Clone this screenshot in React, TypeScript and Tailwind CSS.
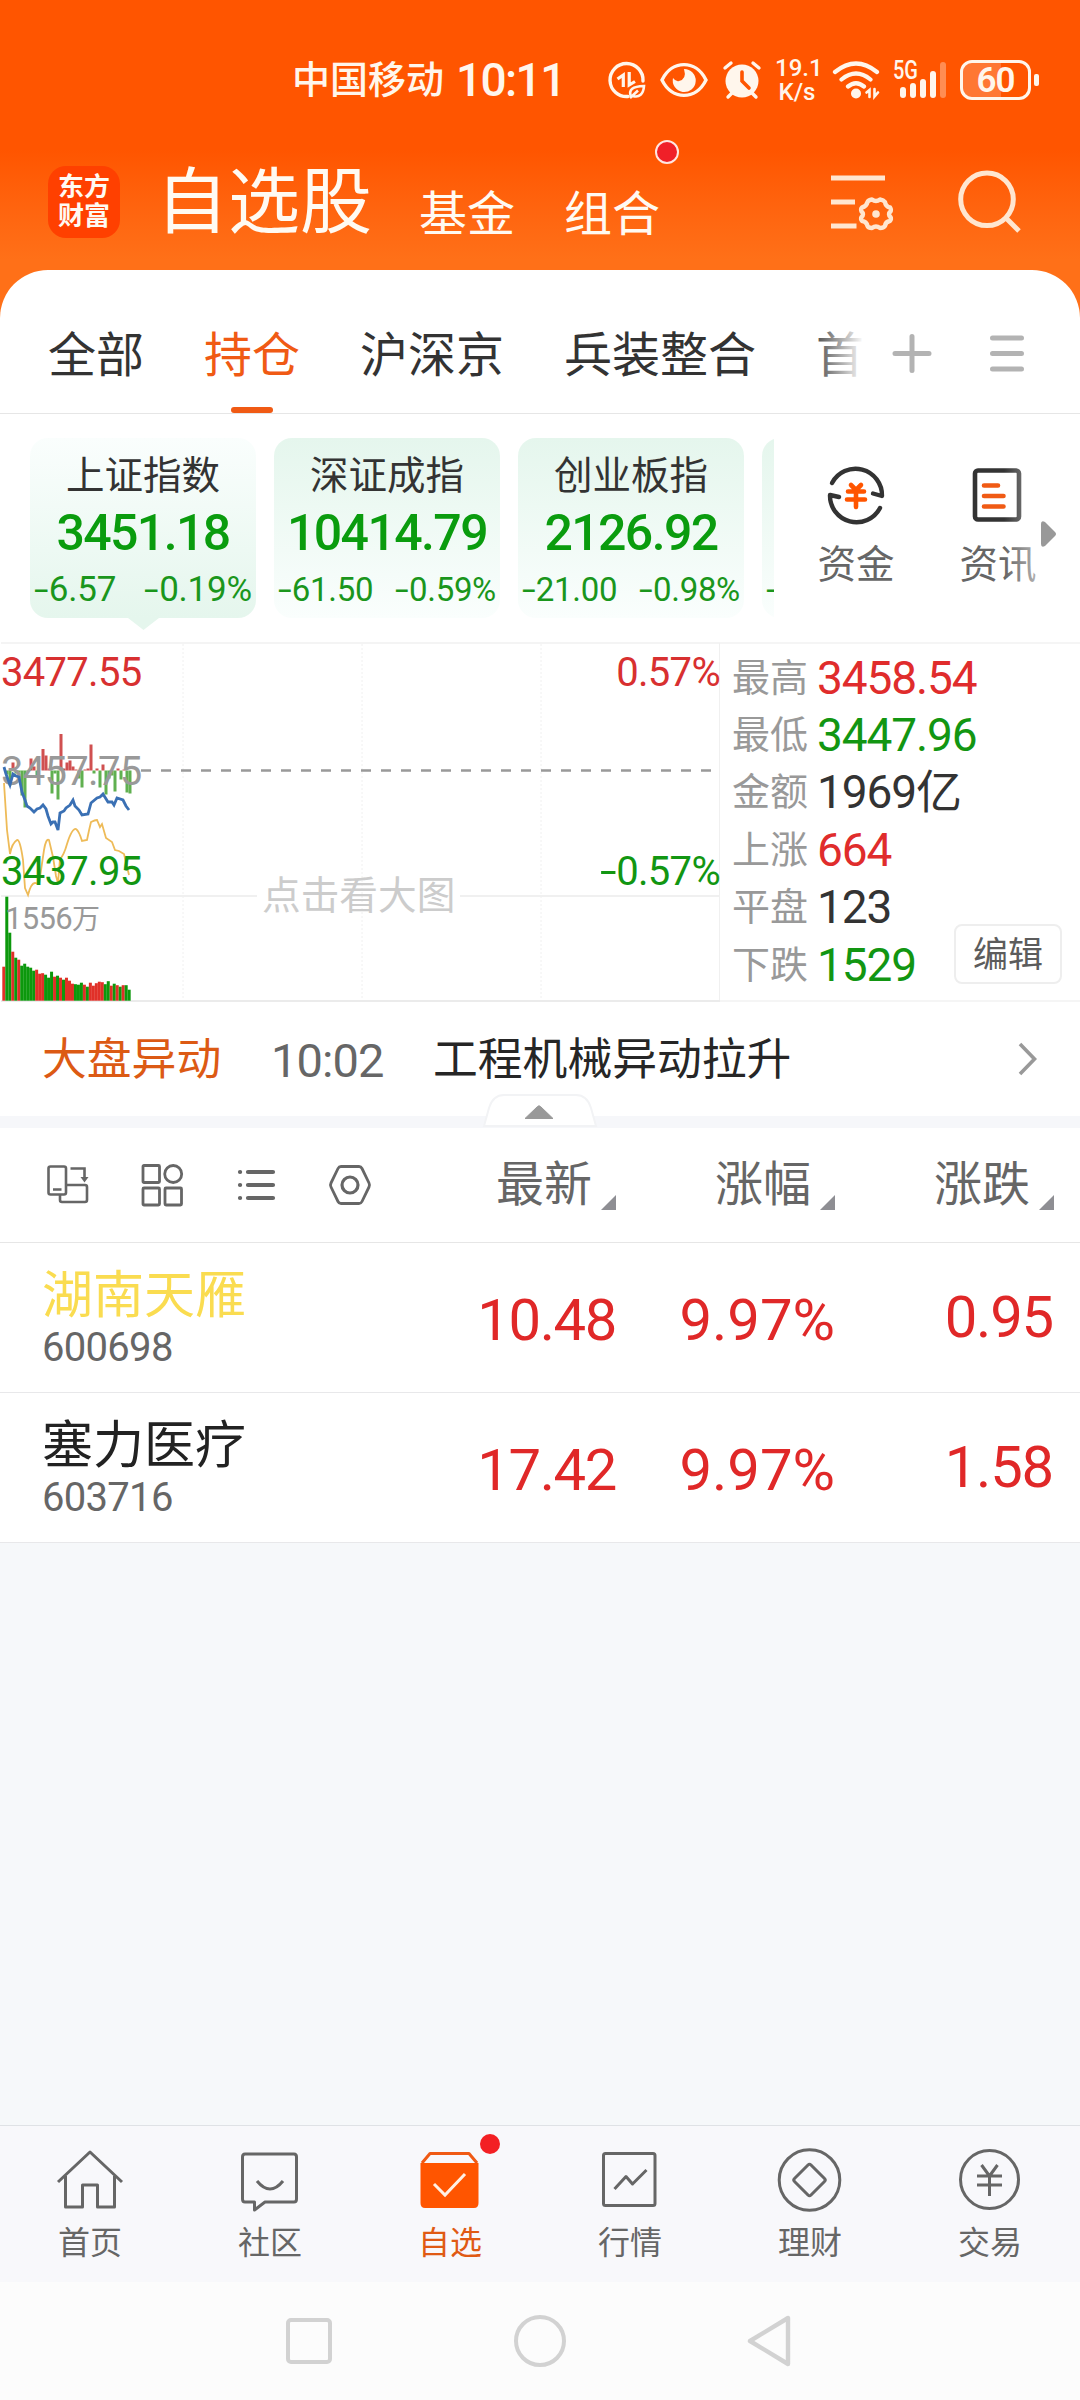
import type { ReactNode } from 'react'
import clsx from 'clsx'

const TABS = ['全部', '持仓', '沪深京', '兵装整合', '首']

const INDICES = [
  { name: '上证指数', value: '3451.18', diff: '-6.57', pct: '-0.19%' },
  { name: '深证成指', value: '10414.79', diff: '-61.50', pct: '-0.59%' },
  { name: '创业板指', value: '2126.92', diff: '-21.00', pct: '-0.98%' },
]

const STATS = [
  { label: '最高', value: '3458.54', color: 'text-[#e02c2c]' },
  { label: '最低', value: '3447.96', color: 'text-[#129612]' },
  { label: '金额', value: '1969亿', color: 'text-[#333]' },
  { label: '上涨', value: '664', color: 'text-[#e02c2c]' },
  { label: '平盘', value: '123', color: 'text-[#333]' },
  { label: '下跌', value: '1529', color: 'text-[#129612]' },
]

const COLUMNS = ['最新', '涨幅', '涨跌']

const STOCKS = [
  { name: '湖南天雁', code: '600698', price: '10.48', pct: '9.97%', diff: '0.95', marked: true },
  { name: '塞力医疗', code: '603716', price: '17.42', pct: '9.97%', diff: '1.58', marked: false },
]

// [x, height]: positive goes up in red, negative goes down in green
const FLOW = [
  [7, -4], [10, -15], [13, 8], [16, -3], [19, -2], [22, -25], [25, -37], [28, -1], [31, 12], [34, 4],
  [37, -5], [43, 21.5], [46, 15], [49, 2], [52, -23], [55, -3], [58, -29], [61, 36.5], [64, 2], [67, 8],
  [70, 10], [73, 4], [76, 1], [79, -8], [82, -17], [85, 1], [88, 2], [91, 26], [94, -3], [97, 2],
  [100, -17], [103, 6], [106, -24], [109, -8], [112, -5], [115, -21], [118, 2], [121, -9], [124, 1],
  [127, -22], [130, -23],
]

const VOLUME = [
  34, 104, 68, 49, 43, 41, 35, 37, 34, 33, 30, 31, 27, 27.5, 26, 23, 29, 24, 25, 23, 21, 23, 20, 17, 16.5,
  16, 18, 16, 14, 18, 15, 17.5, 19, 18.5, 16.5, 19.5, 15, 17, 15.5, 14, 15.5, 15.5, 11,
]
const VOLUME_DIR = 'rggrgrgggggrrrgggrgrgrrrgggrgrrrrrggrgrgrgg'

const BLUE_LINE =
  '4,127 6,134 10,145 13,134 16,136 19,137 22,152 25,160 27,166 30,168 34,172 37,169 40,168 43,165 46,169 48,176 51,184 53,182 55,182 58,190 60,173 64,171 66,168 70,165 73,160 75,166 79,170 82,175 88,174 91,163 97,158 100,157 103,154 108,162 112,162 114,165 117,158 123,160 126,166 129,170'
const YELLOW_LINE =
  'M4 143 L7 190 L10 214 Q12 203 17 200 Q20 199 23 220 L25 248 L28 255 Q31 243 35 243 L39 244 L44 210 Q46 198 49 200 L53 217 L56 236 L58 243 L60 219 Q64 215 67 204 Q72 188 76 189 Q79 191 82 201 L87 200 Q89 190 91 182 Q95 180 97 180 L100 187 L102 184 L106 198 L112 202 L115 210 L119 211 L124 214 L129 235'

/** Number text, with the short hyphen stretched into a proper minus */
function Num({ children, className }: { children: string; className?: string }) {
  const negative = children.startsWith('-')
  return (
    <span className={className}>
      {negative && <span className="inline-block origin-left scale-x-150 mr-[0.15em]">-</span>}
      {negative ? children.slice(1) : children}
    </span>
  )
}

function StatusBar() {
  return (
    <div className="h-[160px] pl-[292px] flex items-center text-[#fff6ec]">
      <span className="w-[164px] text-[38px] leading-none font-medium">中国移动</span>
      <span className="w-[150px] text-[46px] leading-none font-medium tracking-[-1.6px]">10:11</span>

      <svg className="w-[40px] h-[40px]" viewBox="0 0 40 40" fill="none" stroke="currentColor">
        <path d="M37 21 A16.5 16.5 0 1 0 22 36.5" strokeWidth="3.4" strokeLinecap="round" />
        <path d="M17.3 27 V15 L11.5 19" strokeWidth="3.2" />
        <path d="M23.2 12 V25 L29 21.5" strokeWidth="3.2" />
        <path d="M25 37 C22 29 27 26.500 38 26 C37.500 34 33 38 27 36 M24 38 L32 30.500" strokeWidth="2.6" />
      </svg>
      <svg className="ml-[13px] w-[50px] h-[40px]" viewBox="0 0 50 40" fill="none">
        <path d="M3 20 C13 -0.5 37 -0.5 47 20 C37 40.500 13 40.500 3 20Z" stroke="currentColor" strokeWidth="3.4" />
        <path d="M25 9 A11.5 11.5 0 1 1 14 18 Q17 22 20 21 Q28 19 25 9Z" fill="currentColor" />
      </svg>
      <svg className="ml-[13px] w-[40px] h-[40px]" viewBox="0 0 40 40" fill="none" strokeLinecap="round">
        <circle cx="20" cy="21" r="16.5" fill="currentColor" />
        <path d="M3 8 L9 3 M37 8 L31 3 M6 37 L10 33 M34 37 L30 33" stroke="currentColor" strokeWidth="3.4" />
        <path d="M20 12 V21 L27 28" stroke="#ff5500" strokeWidth="3.6" />
      </svg>
      <div className="ml-[13px] w-[44px] text-center text-[24px] leading-[24px] font-medium">
        <div>19.1</div>
        <div>K/s</div>
      </div>
      <svg className="ml-[13px] w-[50px] h-[40px]" viewBox="0 0 50 40" fill="none" stroke="currentColor" strokeLinecap="round">
        <path d="M3 12 Q24 -5 45 12 M9.5 19.5 Q24 7.5 38.5 19.5 M16 26.5 Q24 20 32 26.5" strokeWidth="4.2" />
        <circle cx="24" cy="33.5" r="5" fill="currentColor" stroke="none" />
        <path d="M37.5 37 V30 L34.5 32.5 M42.5 29 V36.5 L46 32.5" strokeWidth="2.6" />
      </svg>
      <div className="relative ml-[9px] w-[58px] h-[40px]">
        <span className="absolute left-[2px] top-0 text-[25px] leading-[22px] font-medium origin-left scale-x-[0.8]">5G</span>
        <svg className="w-[58px] h-[40px]" viewBox="0 0 58 40" fill="currentColor">
          <rect x="9" y="27" width="6" height="11" rx="3" />
          <rect x="19" y="23" width="6" height="15" rx="3" />
          <rect x="29" y="19" width="6" height="19" rx="3" />
          <rect x="39" y="11" width="6" height="27" rx="3" />
          <rect x="49" y="2" width="6" height="36" rx="3" opacity="0.35" />
        </svg>
      </div>
      <div className="ml-[11px] relative w-[71px] h-[40px] rounded-[12px] border-[3px] border-current overflow-hidden flex items-center justify-center">
        <div className="absolute left-0 inset-y-0 w-[38px] bg-white/20" />
        <span className="relative text-[35px] leading-none font-semibold tracking-[-1px]">60</span>
      </div>
      <div className="ml-[3px] w-[5px] h-[12px] rounded-[2px] bg-current" />
    </div>
  )
}

function TitleBar() {
  return (
    <div className="h-[110px] flex items-start text-[#fffaf2] leading-none">
      <div className="ml-[48px] mt-[6px] size-[72px] rounded-[18px] bg-[#ff4000] flex flex-col items-center justify-center text-[26px] leading-[29px] font-bold">
        <span>东方</span>
        <span>财富</span>
      </div>
      <span className="ml-[36px] mt-[7px] text-[72px]">自选股</span>
      <span className="ml-[47px] mt-[31px] text-[48px]">基金</span>
      <div className="relative ml-[49px] mt-[31px] text-[48px]">
        组合
        <span className="absolute left-[91px] -top-[51px] size-[24px] rounded-full bg-[#f02028] border-2 border-[#ffe6e0]" />
      </div>
      <svg className="ml-[169px] mt-[14px] w-[66px] h-[60px]" viewBox="0 0 66 60" fill="none" stroke="#ffe6d0" strokeWidth="5">
        <path d="M2 4 H56 M2 28 H26 M2 52 H27.5" />
        <path
          d="M43 25.5 Q47 28.500 51 25.500 Q54.500 26 56 28 Q56.500 32.500 61 33.500 Q62.500 36 61.500 37.500 Q58.500 40 61.500 43 Q62.500 45 61 47 Q56.500 47.500 56 52 Q54.500 54 51 54 Q47 51 43 54 Q39.500 54 38.500 52 Q37.500 47.500 33 47 Q31.500 45 32.500 43 Q35.500 40 32.500 37.500 Q31.500 35 33 33.500 Q37.500 32.500 38.500 28 Q39.500 26 43 25.500Z"
          strokeWidth="4.4"
          strokeLinejoin="round"
        />
        <circle cx="47" cy="40" r="3.8" fill="#ffe6d0" stroke="none" />
      </svg>
      <svg className="ml-[60px] mt-[8px] w-[66px] h-[66px]" viewBox="0 0 66 66" fill="none" stroke="#ffe6d0" strokeWidth="5">
        <circle cx="32" cy="31.3" r="26.3" />
        <path d="M50 49 L64 63" />
      </svg>
    </div>
  )
}

function Tabs() {
  return (
    <div className="h-[144px] pt-[28px] border-b border-[#e6e6e6] flex text-[48px] leading-none text-[#333]">
      <div className="relative w-[864px] pl-[48px] flex gap-[60px] overflow-hidden whitespace-nowrap">
        {TABS.map((tab, i) => (
          <div key={tab} className={clsx('relative flex items-center', i === 1 && 'text-[#f05a14]')}>
            {tab}
            {i === 1 && <span className="absolute bottom-0 left-[27px] w-[42px] h-[6px] rounded-full bg-[#f05a14]" />}
          </div>
        ))}
        <div className="absolute right-0 inset-y-0 w-[56px] bg-linear-to-r from-white/0 to-white" />
      </div>
      <svg className="ml-[28px] mt-[35px] w-[40px] h-[40px]" viewBox="0 0 40 40" stroke="#b3b3b3" strokeWidth="5" strokeLinecap="round">
        <path d="M20 3.5 V37.5 M3 20.500 H37" />
      </svg>
      <svg className="ml-[56px] mt-[35px] w-[40px] h-[40px]" viewBox="0 0 40 40" stroke="#b3b3b3" strokeWidth="5" strokeLinecap="round">
        <path d="M4.5 5 H33.5 M4.5 20.500 H33.5 M4.5 36 H33.5" />
      </svg>
    </div>
  )
}

function QuickLink({ label, children }: { label: string; children: ReactNode }) {
  return (
    <div className="w-[142px] pt-[49px] flex flex-col items-center">
      <svg className="size-[64px]" viewBox="0 0 64 64" fill="none" strokeLinecap="round" strokeLinejoin="round">
        {children}
      </svg>
      <span className="mt-[19px] text-[38.5px] leading-none text-[#666]">{label}</span>
    </div>
  )
}

function IndexStrip() {
  return (
    <div className="h-[228px] flex">
      <div className="w-[774px] pl-[30px] pt-[24px] flex gap-[18px] overflow-hidden">
        {INDICES.map((item, i) => (
          <div
            key={item.name}
            className={clsx(
              'relative shrink-0 w-[226px] h-[180px] pt-[18px] rounded-[18px] from-[#e5f6ed] to-[#fafefd] leading-none',
              i === 0 ? 'bg-linear-to-t' : 'bg-linear-to-b',
            )}
          >
            <div className="text-center text-[38.5px] leading-[39px] text-[#333]">{item.name}</div>
            <div className="mt-[13px] text-center text-[50px] font-medium tracking-[-1.6px] text-[#0a9c0e]">{item.value}</div>
            <div
              className={clsx(
                'mt-[14px] px-[4px] flex justify-between leading-[35px] text-[#1a961c]',
                i === 0 ? 'text-[35px] tracking-[-0.2px]' : 'text-[33px] tracking-[-0.3px]',
              )}
            >
              <Num>{item.diff}</Num>
              <Num>{item.pct}</Num>
            </div>
            {i === 0 && (
              <svg className="absolute left-[98px] top-[180px] w-[31px] h-[12px]" viewBox="0 0 31 12" fill="#e5f6ed">
                <path d="M0 0 H31 L15.5 12Z" />
              </svg>
            )}
          </div>
        ))}
        <div className="shrink-0 w-[226px] h-[180px] pt-[134px] pl-[4px] rounded-[18px] bg-linear-to-b from-[#e5f6ed] to-[#fafefd] text-[33px] leading-[35px] text-[#1a961c]">
          <Num>-</Num>
        </div>
      </div>

      <div className="relative flex pl-[11px] w-[306px]">
        <QuickLink label="资金">
          <path d="M8 20 A26.5 26.5 0 0 1 58 33 L49 30.5" stroke="#333" strokeWidth="4.4" />
          <path d="M56 45 A26.5 26.5 0 0 1 6 32 L15 34" stroke="#333" strokeWidth="4.4" />
          <path d="M27 22 L32 27 L37 22 M24 28.5 H40 M23 36.5 H41 M32 27 V44" stroke="#ff5500" strokeWidth="4.6" />
        </QuickLink>
        <QuickLink label="资讯">
          <rect x="9" y="7.5" width="44" height="49" rx="3" stroke="#333" strokeWidth="4.6" />
          <path d="M18 22.5 H32 M18 33 H37.5 M18 43.5 H37.5" stroke="#f05a14" strokeWidth="4.6" />
        </QuickLink>
        <div className="absolute right-[36px] top-[40px] w-[40px] h-[140px] bg-linear-to-r from-white/0 to-white/60" />
        <svg className="absolute left-[267px] top-[107px] w-[16px] h-[26px]" viewBox="0 0 16 26" fill="#999">
          <path d="M0 3 Q0 -1 4 1 L14 11 Q16 13 14 15 L4 25 Q0 27 0 23Z" />
        </svg>
      </div>
    </div>
  )
}

function MinuteChart() {
  return (
    <div className="relative w-[720px] h-[360px] text-[40px] leading-none tracking-[-0.7px]">
      <svg className="w-[720px] h-[360px]" viewBox="0 2 720 360" fill="none">
        <path d="M1 3 H720" stroke="#f4f4f4" strokeWidth="2" />
        <path d="M1 256 H257 M460 256 H720" stroke="#f0f0f0" strokeWidth="2" />
        <path d="M1 361 H720" stroke="#ebebeb" strokeWidth="2" />
        <path d="M183 4 V360 M362 4 V360 M541 4 V360" stroke="#f0f0f0" strokeDasharray="2 2" />
        <path d="M719.5 3 V360" stroke="#f0f0f0" />
        <path d="M141 130.5 H711" stroke="#999" strokeWidth="2.4" strokeDasharray="10 10" />
      </svg>
      <svg className="absolute left-0 top-0 w-[720px] h-[360px]" viewBox="0 2 720 360" fill="none">
        {FLOW.map(([x, h]) => (
          <rect
            key={x}
            x={x - 1.5}
            y={h > 0 ? 130.5 - h : 130.5}
            width="3"
            height={Math.abs(h)}
            fill={h > 0 ? '#d05050' : '#60b050'}
          />
        ))}
        {VOLUME.map((h, i) => (
          <rect
            key={i}
            x={2.3 + i * 2.985}
            y={360.7 - h}
            width="3"
            height={h}
            fill={VOLUME_DIR[i] === 'r' ? '#e03028' : '#0c980c'}
          />
        ))}
        <path d={YELLOW_LINE} stroke="#eebb58" strokeWidth="1.8" />
      </svg>
      <span className="absolute left-[1px] top-[110px] text-[#999]">3457.75</span>
      <svg className="absolute left-0 top-0 w-[720px] h-[360px]" viewBox="0 2 720 360" fill="none">
        <polyline points={BLUE_LINE} stroke="#3a70b4" strokeWidth="2.8" />
      </svg>
      <span className="absolute left-[1px] top-[11px] text-[#d83030]">3477.55</span>
      <span className="absolute left-[1px] top-[210px] text-[#129612]">3437.95</span>
      <span className="absolute right-0 top-[11px] text-[#d83030]">0.57%</span>
      <Num className="absolute right-0 top-[210px] text-[#129612]">-0.57%</Num>
      <span className="absolute left-[5px] top-[261px] text-[31px] text-[#999]">
        1556<span className="text-[28px]">万</span>
      </span>
      <span className="absolute left-[262px] top-[235px] text-[38.7px] tracking-normal text-[#ccc]">点击看大图</span>
    </div>
  )
}

function MarketPanel() {
  return (
    <div className="h-[360px] flex">
      <MinuteChart />
      <div className="relative w-[360px] pl-[12px] pt-[5px] border-y-2 border-[#f5f5f5]">
        {STATS.map(s => (
          <div key={s.label} className="h-[57.4px] flex items-center gap-[9px] leading-none">
            <span className="text-[38px] text-[#999]">{s.label}</span>
            <span className={clsx('text-[46px] tracking-[-1.1px]', s.color)}>{s.value}</span>
          </div>
        ))}
        <button className="absolute left-[234px] top-[280px] w-[108px] h-[60px] pt-[2px] rounded-[8px] border-2 border-[#eee] bg-white text-[35px] leading-none text-[#5c5c5c]">
          编辑
        </button>
      </div>
    </div>
  )
}

function NewsRow() {
  return (
    <div className="relative h-[126px] pt-[2px] border-b-[12px] border-[#f6f7fa] pl-[42px] flex items-center text-[44.8px] leading-none">
      <span className="w-[229px] text-[#dc5a14]">大盘异动</span>
      <span className="w-[162px] text-[47px] text-[#666] tracking-[-0.9px]">10:02</span>
      <span className="w-[360px] whitespace-nowrap text-[#262626]">工程机械异动拉升</span>
      <svg className="ml-[225px] -mt-[2px] w-[20px] h-[36px]" viewBox="0 0 20 36" fill="none" stroke="#999" strokeWidth="3.6">
        <path d="M2 3 L16.5 18 L2 33" />
      </svg>
      {/* collapse handle */}
      <svg className="absolute left-[482px] top-[90px] w-[116px] h-[36px]" viewBox="0 0 116 36">
        <path d="M2 34 L7 16 Q11 3 22 3 H94 Q105 3 109 16 L114 34Z" fill="#fff" stroke="#f2f3f5" strokeWidth="2" />
        <path d="M43 26.5 L55.5 14.5 Q57 13 58.5 14.5 L71 26.5Z" fill="#999" stroke="#999" strokeLinejoin="round" />
      </svg>
    </div>
  )
}

function ListHeader() {
  return (
    <div className="h-[115px] pl-[46px] border-b border-[#e6e6e6] flex items-center text-[#666]">
      <div className="w-[450px] shrink-0 flex gap-[50px]">
        <svg className="w-[44px] h-[44px]" viewBox="0 0 44 44" fill="none" stroke="currentColor" strokeWidth="2.6">
          <rect x="2.5" y="3.5" width="17.5" height="28" rx="2" />
          <path d="M7 26.5 H15.5 M21 22 H39 Q41 22 41 24 V37 Q41 39 39 39 H16 Q14 39 14 37 V32 M24.5 5.5 H38.5 V16" />
          <path d="M34.5 14 H42.5 L38.5 19.5Z" fill="currentColor" stroke="none" />
        </svg>
        <svg className="w-[44px] h-[44px]" viewBox="0 0 44 44" fill="none" stroke="currentColor" strokeWidth="2.8">
          <rect x="3" y="2.5" width="16.5" height="17" rx="1" />
          <circle cx="33.2" cy="11" r="8.5" />
          <rect x="3" y="25" width="16.5" height="17" rx="1" />
          <rect x="25" y="25" width="16.5" height="17" rx="1" />
        </svg>
        <svg className="w-[44px] h-[44px]" viewBox="0 0 44 44" stroke="currentColor" strokeWidth="4.2" strokeLinecap="round">
          <path d="M14 9 H39 M14 22 H39 M14 35 H39 M6 9 h.1 M6 22 h.1 M6 35 h.1" />
        </svg>
        <svg className="w-[44px] h-[44px]" viewBox="0 0 44 44" fill="none" stroke="currentColor" strokeWidth="2.8">
          <path d="M13 3.5 H31 Q33 3.5 34 5.5 L41 20 Q42 22 41 24 L34 38.5 Q33 40.5 31 40.5 H13 Q11 40.5 10 38.5 L3 24 Q2 22 3 20 L10 5.5 Q11 3.5 13 3.5Z" />
          <circle cx="22" cy="22" r="8" strokeWidth="3.2" />
        </svg>
      </div>
      {COLUMNS.map((col, i) => (
        <div key={col} className={clsx('shrink-0 flex items-center', i < 2 && 'w-[219px]')}>
          <span className="text-[48px] leading-none">{col}</span>
          <svg className="ml-[9px] mt-[35px] w-[15px] h-[15px]" viewBox="0 0 15 15" fill="#8e8e93">
            <path d="M15 0 V15 H0Z" />
          </svg>
        </div>
      ))}
    </div>
  )
}

function StockRow({ stock }: { stock: (typeof STOCKS)[number] }) {
  return (
    <div className="h-[150px] border-b border-[#e8e8ea] bg-white flex text-[58px] leading-none text-[#e02828] text-right">
      <div className="w-[416px] pl-[42px] pt-[27px] text-left">
        <div className={clsx('text-[51px]', stock.marked ? 'text-[#fadc50]' : 'text-[#222]')}>{stock.name}</div>
        <div className="mt-[7px] text-[40px] text-[#666] tracking-[-0.7px]">{stock.code}</div>
      </div>
      <span className="w-[200px] pt-[48px] tracking-[-1.4px]">{stock.price}</span>
      <span className="w-[219px] pt-[48px]">{stock.pct}</span>
      <span className="w-[218px] pt-[45px] tracking-[-1.2px]">{stock.diff}</span>
    </div>
  )
}

function NavItem({ label, active, children }: { label: string; active?: boolean; children: ReactNode }) {
  return (
    <div className={clsx('relative w-[180px] pt-[18px] flex flex-col items-center', active ? 'text-[#e05a14]' : 'text-[#666]')}>
      <svg className="w-[72px] h-[72px]" viewBox="0 0 72 72" fill="none" stroke="currentColor" strokeWidth="3" strokeLinejoin="round">
        {children}
      </svg>
      <span className="mt-[11px] text-[32px] leading-none">{label}</span>
      {active && <span className="absolute left-[120px] top-[8px] size-[20px] rounded-full bg-[#f32024]" />}
    </div>
  )
}

function BottomNav() {
  return (
    <nav className="h-[157px] border-t border-[#dfe2e6] bg-[#f8f8fb] flex">
      <NavItem label="首页">
        <path d="M4 38 L36 8 L68 38 M11.5 32 V63 H28.5 V41 H43.5 V63 H60.5 V32" />
      </NavItem>
      <NavItem label="社区">
        <path d="M11 10 H60 Q62.5 10 62.5 13 V55 Q62.5 58 60 58 H31 L20.500 66 V58 H11 Q8.500 58 8.500 55 V13 Q8.500 10 11 10Z" />
        <path d="M23 37 Q36 53 49 37" />
      </NavItem>
      <NavItem label="自选" active>
        <path d="M8 19 L16 9.5 H55 L63 19" stroke="#f05a14" />
        <path d="M6.5 19 H64.5 V59 Q64.5 64 60 64 H11 Q6.5 64 6.500 59Z" fill="#ff5500" stroke="none" />
        <path d="M20 40 L31 51 L51 30" stroke="#fff0e4" strokeLinejoin="miter" />
      </NavItem>
      <NavItem label="行情">
        <rect x="9.5" y="9.5" width="51.5" height="52" rx="2" />
        <path d="M20.5 45 L32 32.5 L38.5 40 L52.5 26" />
      </NavItem>
      <NavItem label="理财">
        <circle cx="35.5" cy="36" r="30.3" />
        <path d="M34 21 Q35.5 19.5 37 21 L50.5 34.5 Q52 36 50.5 37.5 L37 51 Q35.5 52.5 34 51 L20.5 37.5 Q19 36 20.5 34.5Z" />
      </NavItem>
      <NavItem label="交易">
        <circle cx="35.5" cy="35.5" r="29" />
        <path d="M27.5 21 L35.5 32 L43.5 21 M23 32 H48 M23 41 H48 M35.5 32 V52" />
      </NavItem>
    </nav>
  )
}

function SystemNav() {
  return (
    <div className="h-[118px] pl-[286px] bg-[#fcfcfc] flex items-center text-[#d2d2d2]">
      <div className="size-[46px] rounded-[5px] border-4 border-current" />
      <div className="ml-[182px] size-[52px] rounded-full border-4 border-current" />
      <svg className="ml-[180px] w-[46px] h-[52px]" viewBox="0 0 46 52" fill="none" stroke="currentColor" strokeWidth="4.4" strokeLinejoin="round">
        <path d="M4 26 L42 3 V49Z" />
      </svg>
    </div>
  )
}

export default function App() {
  return (
    <div className="w-[1080px] h-[2400px] flex flex-col overflow-hidden bg-[#f6f8fa] font-[Roboto,'Noto_Sans_CJK_SC',sans-serif]">
      <header className="h-[320px] shrink-0 bg-linear-to-b from-[#ff5500] from-[150px] to-[#ff7018] to-[260px]">
        <StatusBar />
        <TitleBar />
      </header>
      <main className="-mt-[50px] rounded-t-[48px] bg-white">
        <Tabs />
        <IndexStrip />
        <MarketPanel />
        <NewsRow />
        <ListHeader />
        {STOCKS.map(stock => (
          <StockRow key={stock.code} stock={stock} />
        ))}
      </main>
      <div className="flex-1" />
      <BottomNav />
      <SystemNav />
    </div>
  )
}
